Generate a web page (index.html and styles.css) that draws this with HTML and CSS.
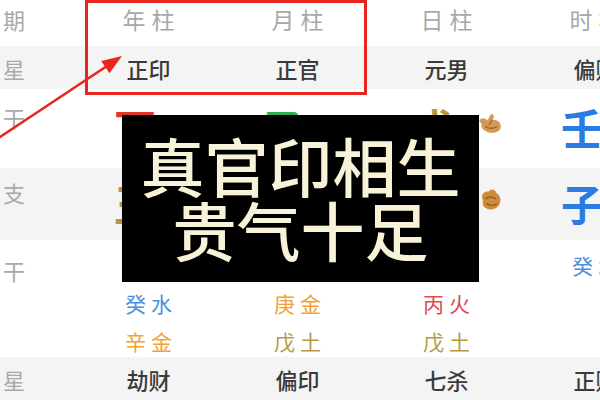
FILE: index.html
```html
<!DOCTYPE html>
<html lang="zh-CN">
<head>
<meta charset="utf-8">
<title>八字排盘</title>
<link rel="stylesheet" href="styles.css">
</head>
<body>
<div class="page">
  <div class="chart">
    <div class="row row-head">
      <div class="cell label">日期</div>
      <div class="cell head">年柱</div>
      <div class="cell head">月柱</div>
      <div class="cell head">日柱</div>
      <div class="cell head">时柱</div>
    </div>
    <div class="row row-star gray">
      <div class="cell label">主星</div>
      <div class="cell star">正印</div>
      <div class="cell star">正官</div>
      <div class="cell star">元男</div>
      <div class="cell star">偏财</div>
    </div>
    <div class="row row-stem">
      <div class="cell label">天干</div>
      <div class="cell big"><span class="glyph fire">丁</span><svg class="icon" viewBox="0 0 20 20"><path d="M3 8 C5 3 11 2 13 6 L18 4 L17 10 C19 14 14 18 9 17 C4 16 1 12 3 8 Z" fill="#c98b3e"/></svg></div>
      <div class="cell big"><span class="glyph wood">乙</span><svg class="icon" viewBox="0 0 20 20"><path d="M3 8 C5 3 11 2 13 6 L18 4 L17 10 C19 14 14 18 9 17 C4 16 1 12 3 8 Z" fill="#c98b3e"/></svg></div>
      <div class="cell big"><span class="glyph earth">戊</span><svg class="icon" viewBox="0 0 20 20"><path d="M1 7 C3 4 6 5 8 7 L10 3 C11 1 14 2 13 5 L12 7 C15 6 19 8 19 12 C19 16 14 18 9 17 C5 16 2 13 3 10 Z" fill="#d29a55"/><path d="M6 12 C9 14 13 14 16 12" stroke="#a0692c" stroke-width="1.3" fill="none"/><path d="M12 7 L9 11" stroke="#a0692c" stroke-width="1" fill="none"/></svg></div>
      <div class="cell big"><span class="glyph water">壬</span></div>
    </div>
    <div class="row row-branch gray">
      <div class="cell label">地支</div>
      <div class="cell big"><span class="glyph earth">丑</span><svg class="icon" viewBox="0 0 20 20"><path d="M3 8 C5 3 11 2 13 6 L18 4 L17 10 C19 14 14 18 9 17 C4 16 1 12 3 8 Z" fill="#c98b3e"/></svg></div>
      <div class="cell big"><span class="glyph metal">申</span><svg class="icon" viewBox="0 0 20 20"><path d="M3 8 C5 3 11 2 13 6 L18 4 L17 10 C19 14 14 18 9 17 C4 16 1 12 3 8 Z" fill="#c98b3e"/></svg></div>
      <div class="cell big"><span class="glyph fire">巳</span><svg class="icon" viewBox="0 0 20 20"><path d="M4 10 C2 6 5 2 9 3 C11 0 15 1 15 4 C19 6 20 11 17 15 C14 19 6 19 4 14 Z" fill="#cf8a3a"/><path d="M6 9 C9 7 12 7 15 9" stroke="#9c5f1f" stroke-width="1.3" fill="none"/><path d="M7 13 C10 15 13 15 16 13" stroke="#9c5f1f" stroke-width="1.1" fill="none"/></svg></div>
      <div class="cell big"><span class="glyph water">子</span></div>
    </div>
    <div class="row row-hidden">
      <div class="cell label">藏干</div>
      <div class="cell hidden-list">
        <span class="hs earth-soft">己土</span>
        <span class="hs water-soft">癸水</span>
        <span class="hs metal-soft">辛金</span>
      </div>
      <div class="cell hidden-list">
        <span class="hs water-soft">壬水</span>
        <span class="hs metal-soft">庚金</span>
        <span class="hs earth-soft">戊土</span>
      </div>
      <div class="cell hidden-list">
        <span class="hs metal-soft">庚金</span>
        <span class="hs fire-soft">丙火</span>
        <span class="hs earth-soft">戊土</span>
      </div>
      <div class="cell hidden-list">
        <span class="hs water-soft">癸水</span>
      </div>
    </div>
    <div class="row row-sub gray">
      <div class="cell label">副星</div>
      <div class="cell star">劫财</div>
      <div class="cell star">偏印</div>
      <div class="cell star">七杀</div>
      <div class="cell star">正财</div>
    </div>
  </div>

  <div class="highlight"></div>

  <svg class="arrow" viewBox="0 0 600 400" width="600" height="400">
    <line x1="-2" y1="138.3" x2="107" y2="66" stroke="#e8261f" stroke-width="2.6"/>
    <polygon points="122,56 109.5,73.2 101.2,61" fill="#e8261f"/>
  </svg>

  <div class="caption">
    <div class="caption-line">真官印相生</div>
    <div class="caption-line">贵气十足</div>
  </div>
</div>
</body>
</html>
```

FILE: styles.css
```css
html, body {
  margin: 0;
  padding: 0;
  background: #ffffff;
}

body {
  width: 600px;
  height: 400px;
  overflow: hidden;
  font-family: "Noto Sans CJK SC", "Noto Sans", sans-serif;
}

.page {
  position: relative;
  width: 600px;
  height: 400px;
  overflow: hidden;
}

.chart {
  margin-left: -75px;
  width: 745px;
  display: flex;
  flex-direction: column;
}

.row {
  display: grid;
  grid-template-columns: repeat(5, 149px);
}

.gray {
  background: #f4f4f4;
}

.row-head { height: 46px; }
.row-star { height: 43px; align-items: center; }
.row-stem { height: 79px; }
.row-branch { height: 72px; }
.row-hidden { height: 117px; }
.row-sub { height: 43px; align-items: center; }

.cell {
  text-align: center;
}

.label {
  color: #a9a9a9;
  font-size: 22px;
  line-height: 22px;
  letter-spacing: 6px;
  text-align: right;
  padding-right: 43px;
  white-space: nowrap;
}

.row-head .label { padding-top: 8px; }
.row-stem .label { padding-top: 17px; }
.row-branch .label { padding-top: 13px; }
.row-hidden .label { padding-top: 19px; }

.head {
  color: #a8a8a8;
  font-size: 23px;
  line-height: 23px;
  letter-spacing: 6px;
  text-indent: 6px;
  padding-top: 8px;
}

.star {
  color: #3a3a3a;
  font-size: 22px;
  line-height: 22px;
  font-weight: 500;
}

.big {
  display: flex;
  align-items: flex-start;
  padding-left: 40px;
  gap: 24px;
}

.row-stem .big { padding-top: 17px; }
.row-branch .big { padding-top: 14px; }

.glyph {
  font-size: 42px;
  line-height: 42px;
  font-weight: 700;
}

.icon {
  width: 24px;
  height: 24px;
  margin-top: 6px;
}

.fire { color: #e0362c; }
.wood { color: #2fae4f; }
.earth { color: #b8963e; }
.metal { color: #e9a13a; }
.water { color: #2a7be4; }

.hidden-list {
  display: flex;
  flex-direction: column;
  align-items: center;
  padding-top: 6px;
}

.hs {
  font-size: 21px;
  line-height: 38px;
  letter-spacing: 5px;
  text-indent: 5px;
}

.water-soft { color: #4b8fe2; }
.metal-soft { color: #f0a232; }
.earth-soft { color: #b39a48; }
.fire-soft { color: #df4a4d; }

.highlight {
  position: absolute;
  left: 85px;
  top: 0;
  width: 282px;
  height: 95px;
  border: 3px solid #e8261f;
  box-sizing: border-box;
}

.arrow {
  position: absolute;
  left: 0;
  top: 0;
  overflow: visible;
}

.caption {
  position: absolute;
  left: 122px;
  top: 115px;
  width: 357px;
  height: 167px;
  box-sizing: border-box;
  padding-bottom: 6px;
  background: #000000;
  display: flex;
  flex-direction: column;
  align-items: center;
  justify-content: center;
  color: #f7f2d8;
  font-size: 64px;
  line-height: 64px;
  font-weight: 500;
}

.caption-line {
  white-space: nowrap;
}
```
